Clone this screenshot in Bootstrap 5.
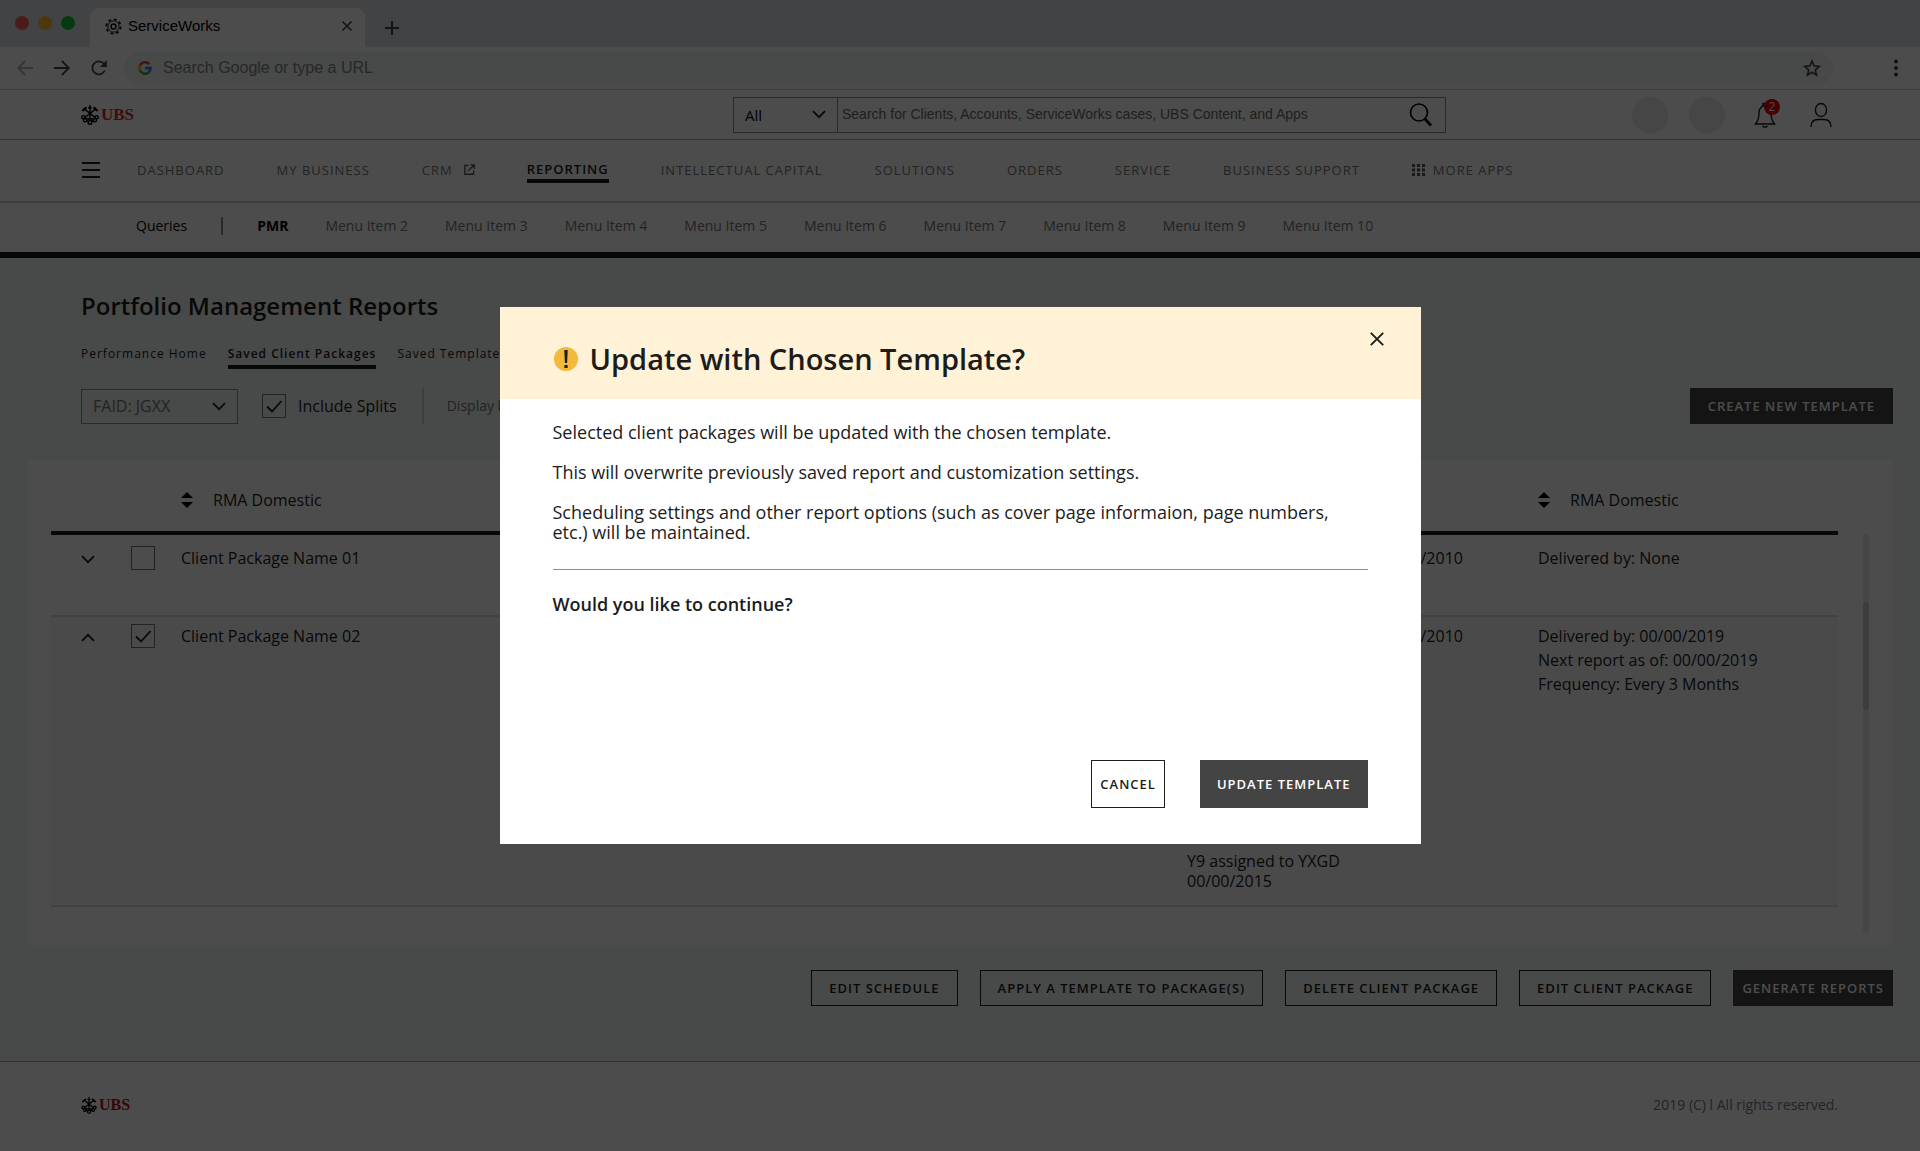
<!DOCTYPE html>
<html lang="en">
<head>
<meta charset="utf-8">
<meta name="viewport" content="width=device-width, initial-scale=1">
<title>ServiceWorks</title>
<link rel="stylesheet" href="https://cdn.jsdelivr.net/npm/bootstrap@5.3.0/dist/css/bootstrap.min.css">
<script src="https://cdn.jsdelivr.net/npm/bootstrap@5.3.0/dist/js/bootstrap.bundle.min.js"></script>
<style>
  body { font-family: "Open Sans", "Noto Sans", sans-serif; font-size: 16px; line-height: 24px; color: #1c1c1c; background: #fff; }
  a { text-decoration: none; color: inherit; }
  svg { display: block; flex: none; }
  .bare { border: 0; background: none; padding: 0; color: inherit; border-radius: 0; }
  .gutter-start { padding-left: 81px; }

  /* browser frame */
  .tabstrip { height: 47px; background: #dee1e6; }
  .lights { width: 90px; padding: 16px 15px 0 15px; }
  .lights span { width: 14px; height: 14px; border-radius: 50%; }
  .light-close { background: #ff5f57; }
  .light-min { background: #ffbd2e; }
  .light-max { background: #13c239; }
  .browser-tab { width: 275px; height: 39px; background: #fff; border-radius: 9px 9px 0 0; padding: 0 12px 3px 15px; gap: 6px; font: 15px/20px "Liberation Sans", sans-serif; color: #000; }
  .toolbar { height: 43px; border-bottom: 1px solid #c9cbce; padding: 0 18px 0 17px; color: #5f6368; gap: 21px; }
  .omnibox { height: 33px; border-radius: 17px; background: #f1f3f4; padding: 0 12px 0 14px; gap: 11px; margin-left: -4px; }
  .omnibox input { font: 16px/20px "Liberation Sans", sans-serif; color: #202124; outline: 0; }
  .omnibox input::placeholder { color: #80868b; opacity: 1; }

  /* application header */
  .brand-row { height: 50px; border-bottom: 1px solid #aaa; padding-right: 88px; }
  .brand-row .ubs { width: 52px; }
  .ubs { font: bold 17px/20px "Liberation Serif", serif; color: #d9262c; gap: 2px; }
  .searchbox { width: 713px; height: 36px; border: 1px solid #8e8e8e; margin-left: 600px; }
  .searchbox label { width: 104px; border-right: 1px solid #8e8e8e; padding: 0 11px; }
  .searchbox select, .pick select { appearance: none; outline: 0; flex: 1; min-width: 0; }
  .searchbox select { font-size: 15px; line-height: 20px; color: #000; }
  .searchbox input { font: 14px/20px "Liberation Sans", sans-serif; outline: 0; padding: 0 0 1px 4px; }
  .searchbox input::placeholder { color: #6a6a6a; opacity: 1; }
  .avatar { width: 36px; height: 36px; border-radius: 50%; background: #eaeaea; margin-right: 21px; }
  .profile { margin-left: 34px; }
  .notice { top: -3px; left: 10px; width: 16px; height: 16px; border-radius: 50%; background: #e60000; color: #fff; font-size: 12px; line-height: 16px; }

  .main-nav { height: 63px; border-bottom: 2px solid #c8c8c8; padding-bottom: 2px; font-size: 13px; line-height: 20px; letter-spacing: 1px; color: #757575; }
  .main-nav ul { gap: 52px; margin-left: 37px; }
  .main-nav .current { color: #1c1c1c; font-weight: 600; border-bottom: 4px solid #1c1c1c; display: block; margin-top: 3px; }
  .external { margin-left: 11px; }
  .sub-nav { height: 55px; border-bottom: 6px solid #1c1c1c; padding-left: 136px; font-size: 14px; line-height: 20px; color: #757575; padding-bottom: 3px; }
  .sub-nav ul { gap: 37px; margin-left: 34px; }
  .rule { width: 2px; height: 18px; background: #8e8e8e; margin-left: 34px; }

  /* workspace */
  .workspace { background: #f0f5f3; padding: 30px 27px 55px; }
  .workspace h1 { font-size: 24px; line-height: 36px; font-weight: 600; margin: 0 0 20px 54px; }
  .view-tabs { font-size: 12px; line-height: 20px; letter-spacing: 1px; gap: 21px; margin: 0 0 19px 54px; }
  .view-tabs a { display: block; border-bottom: 4px solid transparent; padding-bottom: 1px; }
  .view-tabs .current { font-weight: 600; border-color: #1c1c1c; }
  .controls { margin: 0 0 36px 54px; height: 36px; }
  .pick { width: 157px; height: 35px; border: 1px solid #8e8e8e; padding: 0 11px; color: #757575; }
  .tick { appearance: none; width: 24px; height: 24px; border: 1px solid #757575; margin: 0; display: block; flex: none; border-radius: 0; }
  .tick:checked { background: url("data:image/svg+xml,%3Csvg xmlns='http://www.w3.org/2000/svg' viewBox='0 0 22 22'%3E%3Cpath d='M4 11.500l5 5L18.500 6' fill='none' stroke='%231c1c1c' stroke-width='1.800'/%3E%3C/svg%3E") center / 22px no-repeat; }
  .split-rule { width: 2px; height: 36px; background: #cdcdcd; margin: 0 23px 0 25px; }
  .act { border: 1px solid #1c1c1c; border-radius: 0; background: none; color: #1c1c1c; font-size: 13px; line-height: 20px; font-weight: 600; letter-spacing: 1px; padding: 7px 17px; white-space: nowrap; }
  .act-solid { background: #444; border-color: #444; color: #fff; }
  .act-slim { padding-left: 8px; padding-right: 8px; }
  .act-row { gap: 22px; margin-top: 25px; }

  .sheet { background: #fff; padding: 28px 24px 38px; }
  .grid-table { table-layout: fixed; width: 100%; color: #1c1c1c; margin: 0; }
  .grid-table th { font-weight: 400; padding: 0 0 19px; }
  .grid-table thead tr { border-bottom: 4px solid #1c1c1c; }
  .grid-table tbody tr { border-bottom: 2px solid #dcdcdc; }
  .grid-table td { padding: 7px 0 12px; vertical-align: top; }
  .grid-table .opened { background: #f8f8f8; }
  .grid-table .closed td { padding-top: 11px; height: 83px; }
  .grid-table .opened td { height: 290px; }
  .grid-table .assigned { vertical-align: bottom; line-height: 20px; padding-bottom: 14px; }
  .grid-table .toggle-cell { padding-left: 30px; }
  .col-toggle { width: 80px; }
  .col-tick { width: 50px; }
  .col-assigned { width: 191px; }
  .col-date { width: 160px; }
  .col-delivery { width: 300px; }
  .track { flex: none; width: 6px; border-radius: 3px; background: #eaeaea; margin: 46px 0 -26px 25px; padding-top: 68px; }
  .track div { height: 108px; border-radius: 3px; background: #cdcdcd; }
  .page-foot { border-top: 1px solid #aaa; padding: 33px 82px 36px 81px; font-size: 14px; line-height: 20px; color: #757575; }
  .page-foot .ubs { font-size: 16px; color: #b3161c; }

  /* dialog */
  .modal-backdrop.show { opacity: .7; }
  .ask { max-width: 921px; }
  .ask .modal-content { border: 0; border-radius: 0; min-height: 537px; color: #1c1c1c; }
  .ask .modal-header { background: #fff2d7; border: 0; border-radius: 0; height: 92px; padding: 12px 29px 0 54px; }
  .ask .modal-title { font-size: 29px; line-height: 40px; font-weight: 600; }
  .ask .dismiss { width: 30px; height: 30px; margin-top: 5px; }
  .ask .modal-body { padding: 23px 53px 0; font-size: 18px; line-height: 20px; }
  .ask .modal-body p { margin: 0 0 20px; }
  .ask .modal-body hr { margin: 27px 0 24px; border-top: 1px solid #8e8e8e; opacity: 1; }
  .ask .modal-footer { border: 0; padding: 0 53px 36px; gap: 35px; }
  .ask .act { margin: 0; padding: 13px 16px; }
  .ask .act-slim { padding: 13px 8px; }
</style>
</head>
<body>
<svg class="d-none" aria-hidden="true">
  <symbol id="i-keys" viewBox="0 0 20 22"><g fill="none" stroke="#000" stroke-width="1.600"><path d="M10 0v17M3.500 4l13 10.500M16.500 4l-13 10.500M8 3h4" /><path d="M1.500 6.500l4.500-4M18.500 6.500l-4.500-4" stroke-width="2.400"/><circle cx="2.600" cy="13.500" r="1.800"/><circle cx="17.400" cy="13.500" r="1.800"/><circle cx="4.600" cy="16.800" r="1.800"/><circle cx="15.400" cy="16.800" r="1.800"/><circle cx="10" cy="19.200" r="2"/><circle cx="7.600" cy="16.500" r="1.500"/><circle cx="12.400" cy="16.500" r="1.500"/></g></symbol>
  <symbol id="i-down" viewBox="0 0 14 9"><path d="M1 1.200l6 6 6-6" fill="none" stroke="currentColor" stroke-width="1.800"/></symbol>
  <symbol id="i-sort" viewBox="0 0 12 16"><path d="M0 6l6-6 6 6zM0 10l6 6 6-6z"/></symbol>
</svg>

<div class="tabstrip d-flex align-items-end">
  <div class="lights d-flex justify-content-between align-self-start"><span class="light-close"></span><span class="light-min"></span><span class="light-max"></span></div>
  <div class="browser-tab d-flex align-items-center">
    <svg width="17" height="17" viewBox="0 0 18 18" fill="none" stroke="#111"><circle cx="9" cy="9" r="7.600" stroke-width="1.800" stroke-dasharray="3.200 2.770"/><circle cx="9" cy="9" r="6" stroke-width="1"/><circle cx="9" cy="9" r="2.600" stroke-width="1.600"/></svg>
    <span class="flex-grow-1">ServiceWorks</span>
    <button class="bare" aria-label="Close tab"><svg width="12" height="12" viewBox="0 0 12 12" stroke="#444" stroke-width="1.600"><path d="M1.500 1.500l9 9M10.500 1.500l-9 9"/></svg></button>
  </div>
  <button class="bare align-self-center ms-3 pt-2" aria-label="New tab"><svg class="ms-1" width="14" height="14" viewBox="0 0 14 14" stroke="#444" stroke-width="2"><path d="M7 0v14M0 7h14"/></svg></button>
</div>

<div class="toolbar d-flex align-items-center">
  <button class="bare" aria-label="Back"><svg width="16" height="16" viewBox="0 0 16 16" fill="none" stroke="#aeb1b5" stroke-width="1.800"><path d="M16 8H1.500M8 1L1.200 8 8 15"/></svg></button>
  <button class="bare" aria-label="Forward"><svg width="16" height="16" viewBox="0 0 16 16" fill="none" stroke="#444" stroke-width="1.800"><path d="M0 8h14.500M8 1l6.800 7L8 15"/></svg></button>
  <button class="bare" aria-label="Reload"><svg width="16" height="16" viewBox="0 0 16 16"><path d="M13.800 10.500A6.500 6.500 0 1 1 12.800 3.600" fill="none" stroke="#444" stroke-width="1.800"/><path d="M15.800 0v7H9z" fill="#444"/></svg></button>
  <div class="omnibox d-flex align-items-center flex-grow-1">
    <svg width="14" height="14" viewBox="0 0 16 16" fill="none" stroke-width="3"><path d="M13 3.700A6.400 6.400 0 0 0 2.300 5.100" stroke="#ea4335"/><path d="M2.300 5.100a6.400 6.400 0 0 0 0 5.800" stroke="#fbbc05"/><path d="M2.300 10.900a6.400 6.400 0 0 0 9.900 2.200" stroke="#34a853"/><path d="M8 8.200h6.300a6.400 6.400 0 0 1-2.100 4.900" stroke="#4285f4"/></svg>
    <input class="bare flex-grow-1" type="text" placeholder="Search Google or type a URL" aria-label="Address">
    <svg width="18" height="18" viewBox="0 0 18 18" fill="none" stroke="#444" stroke-width="1.600"><path d="M9 2l2.100 4.900 5.200.4-4 3.500 1.300 5.200L9 13.200 4.400 16l1.300-5.200-4-3.500 5.200-.4z"/></svg>
  </div>
  <button class="bare ms-4 ps-2" aria-label="Menu"><svg class="ms-1" width="12" height="18" viewBox="0 0 12 18" fill="#444"><circle cx="6" cy="2.500" r="2"/><circle cx="6" cy="9" r="2"/><circle cx="6" cy="15.500" r="2"/></svg></button>
</div>

<header class="brand-row gutter-start d-flex align-items-center">
  <a class="ubs d-flex align-items-center" href="#"><svg width="18" height="22"><use href="#i-keys"/></svg>UBS</a>
  <form class="searchbox d-flex">
    <label class="d-flex align-items-center"><select class="bare" aria-label="Scope"><option>All</option></select><svg width="14" height="9"><use href="#i-down"/></svg></label>
    <input class="bare flex-grow-1" type="search" placeholder="Search for Clients, Accounts, ServiceWorks cases, UBS Content, and Apps" aria-label="Search">
    <button class="bare px-2 me-1" type="button" aria-label="Search"><svg width="24" height="24" viewBox="0 0 24 24" fill="none" stroke="#000"><circle cx="10" cy="9.500" r="8.500" stroke-width="1.600"/><path d="M16 16l6 6.500" stroke-width="2.800"/></svg></button>
  </form>
  <div class="d-flex align-items-center ms-auto">
    <span class="avatar"></span><span class="avatar"></span>
    <button class="bare position-relative ms-2" aria-label="Notifications"><svg width="22" height="26" viewBox="0 0 22 26" fill="none" stroke="#1c1c1c" stroke-width="1.400"><path d="M9 3.500V1.500h4v2M1.500 22c3-3.500 3.500-6 3.500-11 0-5 3-7.500 6-7.500s6 2.500 6 7.500c0 5 .5 7.500 3.500 11zM8.500 24c1 1.500 4 1.500 5 0"/></svg><span class="notice position-absolute">2</span></button>
    <button class="bare profile" aria-label="Profile"><svg width="22" height="26" viewBox="0 0 22 26" fill="none" stroke="#1c1c1c" stroke-width="1.400"><ellipse cx="11" cy="8" rx="5.600" ry="6.500"/><path d="M1 25c0-5 3-7.500 7-7.500h6c4 0 7 2.500 7 7.500"/></svg></button>
  </div>
</header>

<nav class="main-nav gutter-start d-flex align-items-center">
  <button class="bare" aria-label="Menu"><svg width="19" height="18" viewBox="0 0 19 18" stroke="#1c1c1c" stroke-width="2"><path d="M1 2h18M1 9h18M1 16h18"/></svg></button>
  <ul class="list-unstyled d-flex align-items-center mb-0">
    <li><a href="#">DASHBOARD</a></li>
    <li><a href="#">MY BUSINESS</a></li>
    <li><a class="d-flex align-items-center" href="#">CRM<svg class="external" width="11" height="11" viewBox="0 0 12 12" fill="none" stroke="#555" stroke-width="1.500"><path d="M5 1.500H1v9.700h9.500V7M4.500 7.500L11 1M7 1h4.200v4.500"/></svg></a></li>
    <li><a class="current" href="#">REPORTING</a></li>
    <li><a href="#">INTELLECTUAL CAPITAL</a></li>
    <li><a href="#">SOLUTIONS</a></li>
    <li><a href="#">ORDERS</a></li>
    <li><a href="#">SERVICE</a></li>
    <li><a href="#">BUSINESS SUPPORT</a></li>
    <li><a class="d-flex align-items-center" href="#"><svg class="me-2" width="13" height="12" viewBox="0 0 13 12" stroke="#555" stroke-width="3" stroke-dasharray="3 2"><path d="M0 1.500h13M0 6h13M0 10.500h13"/></svg>MORE APPS</a></li>
  </ul>
</nav>

<nav class="sub-nav d-flex align-items-center">
  <a class="text-black" href="#">Queries</a><span class="rule"></span>
  <ul class="list-unstyled d-flex mb-0">
    <li><a class="fw-bold text-black" href="#">PMR</a></li>
    <li><a href="#">Menu Item 2</a></li><li><a href="#">Menu Item 3</a></li><li><a href="#">Menu Item 4</a></li>
    <li><a href="#">Menu Item 5</a></li><li><a href="#">Menu Item 6</a></li><li><a href="#">Menu Item 7</a></li>
    <li><a href="#">Menu Item 8</a></li><li><a href="#">Menu Item 9</a></li><li><a href="#">Menu Item 10</a></li>
  </ul>
</nav>

<main class="workspace">
  <h1>Portfolio Management Reports</h1>
  <nav class="view-tabs d-flex"><a href="#">Performance Home</a><a class="current" href="#">Saved Client Packages</a><a href="#">Saved Templates</a></nav>
  <div class="controls d-flex align-items-center">
    <label class="pick d-flex align-items-center"><select class="bare" aria-label="FAID"><option>FAID: JGXX</option></select><svg class="text-dark" width="14" height="9"><use href="#i-down"/></svg></label>
    <label class="d-flex align-items-center ms-4"><input class="tick me-2" type="checkbox" checked><span class="ms-1">Include Splits</span></label>
    <span class="split-rule"></span><span class="small text-secondary">Display by</span>
    <button class="act act-solid ms-auto">CREATE NEW TEMPLATE</button>
  </div>

  <div class="sheet d-flex">
    <div class="flex-grow-1">
      <table class="grid-table">
        <colgroup><col class="col-toggle"><col class="col-tick"><col><col class="col-assigned"><col class="col-date"><col class="col-delivery"></colgroup>
        <thead><tr><th></th><th></th>
          <th><div class="d-flex align-items-center"><svg width="12" height="16"><use href="#i-sort"/></svg><span class="ms-3 ps-1">RMA Domestic</span></div></th><th></th><th></th>
          <th><div class="d-flex align-items-center"><svg width="12" height="16"><use href="#i-sort"/></svg><span class="ms-3 ps-1">RMA Domestic</span></div></th></tr></thead>
        <tbody>
          <tr class="closed"><td class="toggle-cell"><button class="bare" aria-label="Expand"><svg class="mt-2" width="14" height="9"><use href="#i-down"/></svg></button></td><td><input class="tick" type="checkbox" aria-label="Select Client Package Name 01"></td><td>Client Package Name 01</td><td></td><td>00/00/2010</td><td>Delivered by: None</td></tr>
          <tr class="opened"><td class="toggle-cell"><button class="bare" aria-label="Collapse"><svg class="mt-2" width="14" height="9" viewBox="0 0 14 9"><path d="M1 7.800l6-6 6 6" fill="none" stroke="currentColor" stroke-width="1.800"/></svg></button></td><td><input class="tick" type="checkbox" checked aria-label="Select Client Package Name 02"></td><td>Client Package Name 02</td><td class="assigned">Y9 assigned to YXGD<br>00/00/2015</td><td>00/00/2010</td><td>Delivered by: 00/00/2019<br>Next report as of: 00/00/2019<br>Frequency: Every 3 Months</td></tr>
        </tbody>
      </table>
    </div>
    <div class="track"><div></div></div>
  </div>

  <div class="act-row d-flex justify-content-end">
    <button class="act">EDIT SCHEDULE</button><button class="act">APPLY A TEMPLATE TO PACKAGE(S)</button><button class="act">DELETE CLIENT PACKAGE</button><button class="act">EDIT CLIENT PACKAGE</button><button class="act act-solid act-slim">GENERATE REPORTS</button>
  </div>
</main>

<footer class="page-foot d-flex justify-content-between align-items-center">
  <a class="ubs d-flex align-items-center" href="#"><svg width="16" height="17"><use href="#i-keys"/></svg>UBS</a>
  <span>2019 (C) l All rights reserved.</span>
</footer>

<div class="modal-backdrop show"></div>
<div class="modal show d-block" tabindex="-1" role="dialog" aria-modal="true" aria-labelledby="ask-title">
  <div class="modal-dialog modal-dialog-centered ask">
    <div class="modal-content">
      <div class="modal-header align-items-start">
        <div class="d-flex align-items-center pt-3 mt-1">
          <svg width="24" height="24" viewBox="0 0 24 24"><circle cx="12" cy="12" r="12" fill="#f2b93b"/><path d="M10.300 3h3.400l-.6 13h-2.200zM10.400 18h3.200v3h-3.200z" fill="#1c1c1c"/></svg>
          <h2 class="modal-title ms-2 ps-1" id="ask-title">Update with Chosen Template?</h2>
        </div>
        <button class="bare dismiss" aria-label="Close"><svg class="mx-auto" width="14" height="14" viewBox="0 0 14 14" stroke="#1c1c1c" stroke-width="1.900"><path d="M.8.8l12.400 12.400M13.200.8L.8 13.200"/></svg></button>
      </div>
      <div class="modal-body">
        <p>Selected client packages will be updated with the chosen template.</p>
        <p>This will overwrite previously saved report and customization settings.</p>
        <p>Scheduling settings and other report options (such as cover page informaion, page numbers, etc.) will be maintained.</p>
        <hr>
        <p class="fw-semibold">Would you like to continue?</p>
      </div>
      <div class="modal-footer"><button class="act act-slim">CANCEL</button><button class="act act-solid">UPDATE TEMPLATE</button></div>
    </div>
  </div>
</div>
</body>
</html>
